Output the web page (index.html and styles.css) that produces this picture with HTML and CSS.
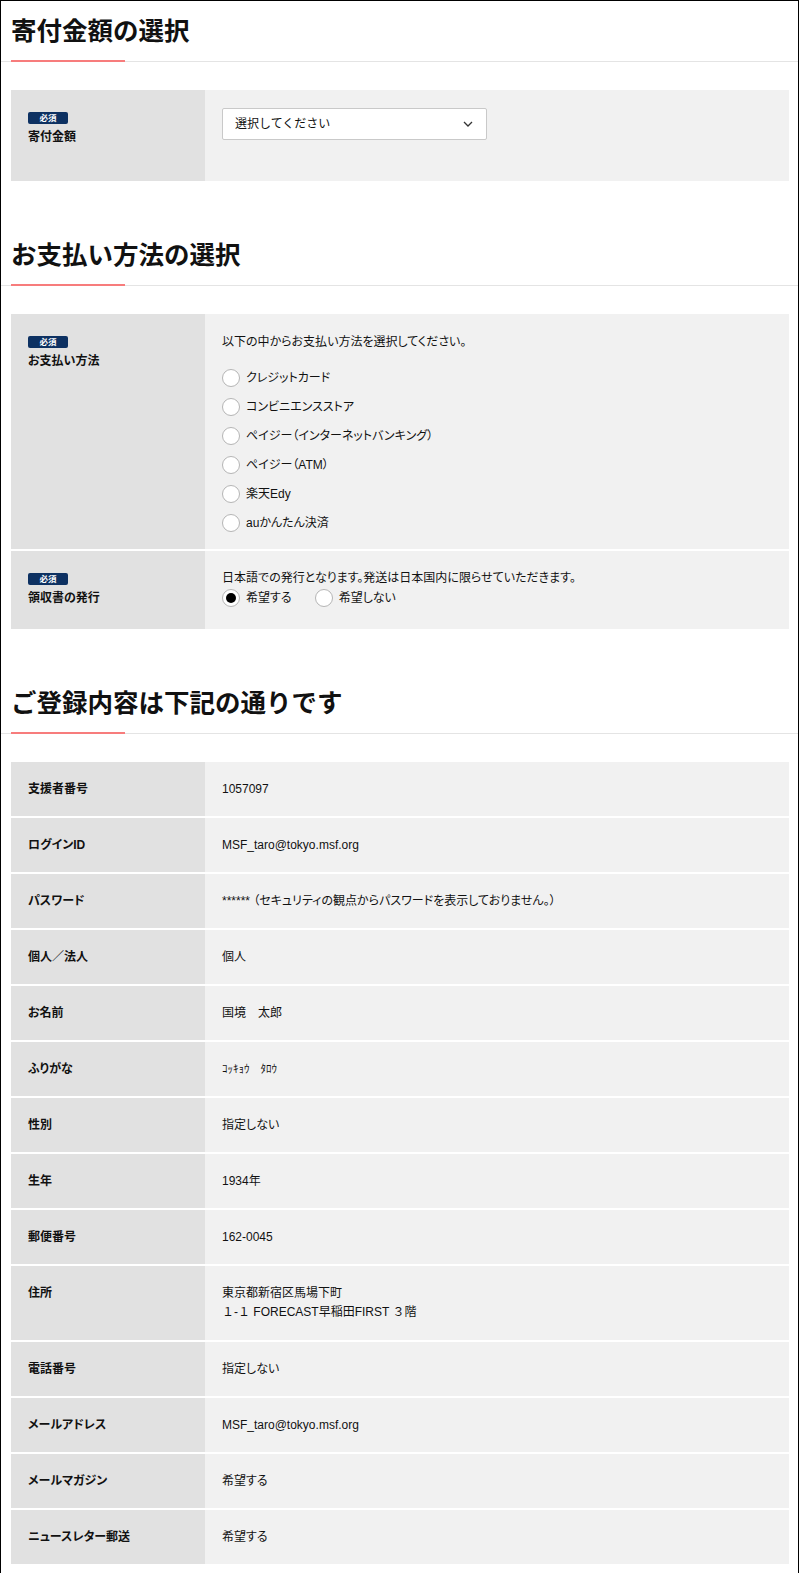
FILE: index.html
```html
<!DOCTYPE html>
<html lang="ja">
<head>
    <meta charset="UTF-8">
    <meta name="viewport" content="width=device-width, initial-scale=1.0">
    <title>ご寄付の入力</title>
    <link rel="stylesheet" href="styles.css">
</head>
<body>

<div class="page">

    <!-- 寄付金額 -->
    <h2 class="section-title">寄付金額の選択</h2>
    <div class="form-table">
        <div class="form-row">
            <div class="form-label">
                <span class="badge">必須</span>
                <span class="label-text">寄付金額</span>
            </div>
            <div class="form-value value-amount">
                <div class="select-wrap">
                    <select id="amount">
                        <option>選択してください</option>
                        <option>3,000円</option>
                        <option>5,000円</option>
                        <option>10,000円</option>
                    </select>
                    <svg class="select-arrow" width="10" height="6" viewBox="0 0 10 6">
                        <path d="M1 1 L5 5 L9 1" fill="none" stroke="#333" stroke-width="1.3"/>
                    </svg>
                </div>
            </div>
        </div>
    </div>

    <!-- お支払い方法 -->
    <h2 class="section-title">お支払い方法の選択</h2>
    <div class="form-table">
        <div class="form-row">
            <div class="form-label">
                <span class="badge">必須</span>
                <span class="label-text">お支払い方法</span>
            </div>
            <div class="form-value value-payment">
                <p class="note">以下の中からお支払い方法を選択してください。</p>
                <ul class="radio-list">
                    <li><label class="radio"><input type="radio" name="pay"><span>クレジットカード</span></label></li>
                    <li><label class="radio"><input type="radio" name="pay"><span>コンビニエンスストア</span></label></li>
                    <li><label class="radio"><input type="radio" name="pay"><span>ペイジー（インターネットバンキング）</span></label></li>
                    <li><label class="radio"><input type="radio" name="pay"><span>ペイジー（ATM）</span></label></li>
                    <li><label class="radio"><input type="radio" name="pay"><span>楽天Edy</span></label></li>
                    <li><label class="radio"><input type="radio" name="pay"><span>auかんたん決済</span></label></li>
                </ul>
            </div>
        </div>
        <div class="form-row">
            <div class="form-label">
                <span class="badge">必須</span>
                <span class="label-text">領収書の発行</span>
            </div>
            <div class="form-value value-receipt">
                <p class="note">日本語での発行となります。発送は日本国内に限らせていただきます。</p>
                <div class="radio-inline">
                    <label class="radio"><input type="radio" name="receipt" checked><span>希望する</span></label>
                    <label class="radio"><input type="radio" name="receipt"><span>希望しない</span></label>
                </div>
            </div>
        </div>
    </div>

    <!-- 登録内容 -->
    <h2 class="section-title">ご登録内容は下記の通りです</h2>
    <div class="form-table info-table">
        <div class="form-row">
            <div class="form-label">支援者番号</div>
            <div class="form-value">1057097</div>
        </div>
        <div class="form-row">
            <div class="form-label">ログインID</div>
            <div class="form-value">MSF_taro@tokyo.msf.org</div>
        </div>
        <div class="form-row">
            <div class="form-label">パスワード</div>
            <div class="form-value">****** （セキュリティの観点からパスワードを表示しておりません。）</div>
        </div>
        <div class="form-row">
            <div class="form-label">個人／法人</div>
            <div class="form-value">個人</div>
        </div>
        <div class="form-row">
            <div class="form-label">お名前</div>
            <div class="form-value">国境　太郎</div>
        </div>
        <div class="form-row">
            <div class="form-label">ふりがな</div>
            <div class="form-value kana">ｺｯｷｮｳ　ﾀﾛｳ</div>
        </div>
        <div class="form-row">
            <div class="form-label">性別</div>
            <div class="form-value">指定しない</div>
        </div>
        <div class="form-row">
            <div class="form-label">生年</div>
            <div class="form-value">1934年</div>
        </div>
        <div class="form-row">
            <div class="form-label">郵便番号</div>
            <div class="form-value">162-0045</div>
        </div>
        <div class="form-row">
            <div class="form-label">住所</div>
            <div class="form-value address">東京都新宿区馬場下町<br>１-１ FORECAST早稲田FIRST ３階</div>
        </div>
        <div class="form-row">
            <div class="form-label">電話番号</div>
            <div class="form-value">指定しない</div>
        </div>
        <div class="form-row">
            <div class="form-label">メールアドレス</div>
            <div class="form-value">MSF_taro@tokyo.msf.org</div>
        </div>
        <div class="form-row">
            <div class="form-label">メールマガジン</div>
            <div class="form-value">希望する</div>
        </div>
        <div class="form-row">
            <div class="form-label">ニュースレター郵送</div>
            <div class="form-value">希望する</div>
        </div>
    </div>

</div>

</body>
</html>
```

FILE: styles.css
```css
body {
    margin: 0;
    font-family: "Liberation Sans", Arial, "Noto Sans CJK JP", sans-serif;
    font-size: 12px;
    color: #111;
    background-color: #fff;
}

.page {
    width: 797px;
    border: 1px solid #000;
    padding-bottom: 14px;
}

/* section heading with red accent line */
.section-title {
    position: relative;
    margin: 44px 0 0;
    padding: 12px 10px 12px;
    font-size: 25.5px;
    font-weight: bold;
    line-height: 36px;
    color: #111;
    border-bottom: 1px solid #e4e4e4;
}

.section-title:first-child {
    margin-top: 0;
}

.section-title::after {
    content: "";
    position: absolute;
    left: 10px;
    bottom: -1px;
    width: 114px;
    height: 2px;
    background-color: #f77c7c;
}

.form-table {
    margin: 28px 9px 0 10px;
    display: flex;
    flex-direction: column;
    gap: 2px;
    font-feature-settings: "palt";
}

.form-row {
    display: flex;
}

.form-label {
    width: 194px;
    flex-shrink: 0;
    box-sizing: border-box;
    padding: 22px 17px;
    background-color: #e1e1e1;
    font-weight: bold;
    line-height: 18px;
}

.form-value {
    flex: 1;
    padding: 18px 17px;
    background-color: #f1f1f1;
    line-height: 18px;
}

.badge {
    display: block;
    width: 40px;
    height: 12px;
    border-radius: 2px;
    background-color: #0d3162;
    color: #fff;
    font-size: 8.5px;
    line-height: 12px;
    text-align: center;
    margin-bottom: 4px;
}

.label-text {
    display: block;
}

/* select box */
.value-amount {
    padding-bottom: 41px;
}

.select-wrap {
    position: relative;
    width: 265px;
}

.select-wrap select {
    -webkit-appearance: none;
    appearance: none;
    width: 100%;
    height: 32px;
    padding: 0 12px;
    border: 1px solid #c9c9c9;
    border-radius: 2px;
    background-color: #fff;
    font-family: inherit;
    font-size: 12px;
    color: #111;
}

.select-arrow {
    position: absolute;
    right: 14px;
    top: 13px;
    pointer-events: none;
}

/* radio buttons */
.note {
    margin: 0;
}

.value-payment {
    padding-top: 19px;
    padding-bottom: 16px;
}

.radio-list {
    list-style: none;
    margin: 17px 0 0;
    padding: 0;
    display: flex;
    flex-direction: column;
    gap: 9px;
}

.radio-list li {
    display: flex;
}

.radio {
    display: flex;
    align-items: center;
    gap: 6px;
    height: 20px;
}

.radio input {
    -webkit-appearance: none;
    appearance: none;
    margin: 0;
    width: 18px;
    height: 18px;
    border: 1px solid #b5b5b5;
    border-radius: 50%;
    background-color: #fff;
    position: relative;
}

.radio input:checked::after {
    content: "";
    position: absolute;
    left: 3px;
    top: 3px;
    width: 10px;
    height: 10px;
    border-radius: 50%;
    background-color: #000;
}

.value-receipt {
    padding-top: 18px;
    padding-bottom: 18px;
}

.radio-inline {
    display: flex;
    gap: 23px;
    margin-top: 1px;
}

/* registered info */
.info-table .form-label {
    padding: 18px 17px;
}

.address {
    line-height: 19px;
    font-feature-settings: normal;
}

.kana {
    font-size: 11px;
}
```
